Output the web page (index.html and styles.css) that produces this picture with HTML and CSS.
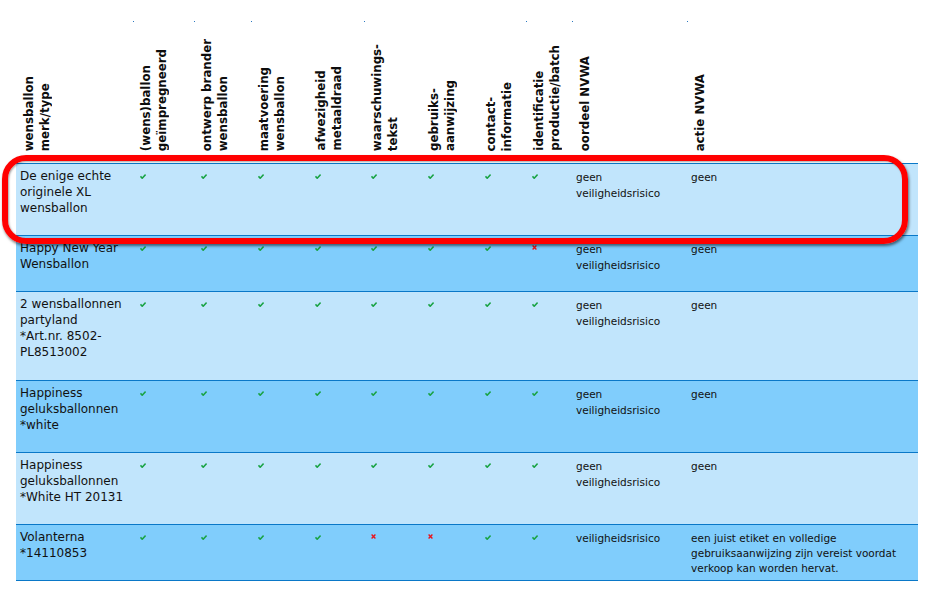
FILE: index.html
```html
<!DOCTYPE html>
<html lang="nl">
<head>
<meta charset="utf-8">
<title>Wensballonnen</title>
<link rel="stylesheet" href="styles.css">
</head>
<body>
<div class="page">
  <div class="grid dots">
    <span></span><span class="dot"></span><span class="dot"></span><span class="dot"></span><span></span><span class="dot"></span><span></span><span></span><span class="dot"></span><span class="dot"></span><span class="dot"></span>
  </div>
  <div class="grid head">
    <div class="th"><div class="rot">wensballon<br>merk/type</div></div>
    <div class="th"><div class="rot">(wens)ballon<br>geïmpregneerd</div></div>
    <div class="th"><div class="rot">ontwerp brander<br>wensballon</div></div>
    <div class="th"><div class="rot">maatvoering<br>wensballon</div></div>
    <div class="th"><div class="rot">afwezigheid<br>metaaldraad</div></div>
    <div class="th"><div class="rot">waarschuwings-<br>tekst</div></div>
    <div class="th"><div class="rot">gebruiks-<br>aanwijzing</div></div>
    <div class="th"><div class="rot">contact-<br>informatie</div></div>
    <div class="th"><div class="rot">identificatie<br>productie/batch</div></div>
    <div class="th"><div class="rot">oordeel NVWA</div></div>
    <div class="th"><div class="rot">actie NVWA</div></div>
  </div>

  <div class="grid row light">
    <div class="name">De enige echte<br>originele XL<br>wensballon</div>
    <div class="c"><i class="ok"></i></div><div class="c"><i class="ok"></i></div><div class="c"><i class="ok"></i></div><div class="c"><i class="ok"></i></div><div class="c"><i class="ok"></i></div><div class="c"><i class="ok"></i></div><div class="c"><i class="ok"></i></div><div class="c"><i class="ok"></i></div>
    <div class="t">geen<br>veiligheidsrisico</div>
    <div class="t">geen</div>
  </div>

  <div class="grid row dark">
    <div class="name">Happy New Year<br>Wensballon</div>
    <div class="c"><i class="ok"></i></div><div class="c"><i class="ok"></i></div><div class="c"><i class="ok"></i></div><div class="c"><i class="ok"></i></div><div class="c"><i class="ok"></i></div><div class="c"><i class="ok"></i></div><div class="c"><i class="ok"></i></div><div class="c"><i class="no"></i></div>
    <div class="t">geen<br>veiligheidsrisico</div>
    <div class="t">geen</div>
  </div>

  <div class="grid row light">
    <div class="name tall">2 wensballonnen<br>partyland<br>*Art.nr. 8502-<br>PL8513002</div>
    <div class="c"><i class="ok"></i></div><div class="c"><i class="ok"></i></div><div class="c"><i class="ok"></i></div><div class="c"><i class="ok"></i></div><div class="c"><i class="ok"></i></div><div class="c"><i class="ok"></i></div><div class="c"><i class="ok"></i></div><div class="c"><i class="ok"></i></div>
    <div class="t">geen<br>veiligheidsrisico</div>
    <div class="t">geen</div>
  </div>

  <div class="grid row dark">
    <div class="name">Happiness<br>geluksballonnen<br>*white</div>
    <div class="c"><i class="ok"></i></div><div class="c"><i class="ok"></i></div><div class="c"><i class="ok"></i></div><div class="c"><i class="ok"></i></div><div class="c"><i class="ok"></i></div><div class="c"><i class="ok"></i></div><div class="c"><i class="ok"></i></div><div class="c"><i class="ok"></i></div>
    <div class="t">geen<br>veiligheidsrisico</div>
    <div class="t">geen</div>
  </div>

  <div class="grid row light">
    <div class="name">Happiness<br>geluksballonnen<br>*White HT 20131</div>
    <div class="c"><i class="ok"></i></div><div class="c"><i class="ok"></i></div><div class="c"><i class="ok"></i></div><div class="c"><i class="ok"></i></div><div class="c"><i class="ok"></i></div><div class="c"><i class="ok"></i></div><div class="c"><i class="ok"></i></div><div class="c"><i class="ok"></i></div>
    <div class="t">geen<br>veiligheidsrisico</div>
    <div class="t">geen</div>
  </div>

  <div class="grid row dark last">
    <div class="name">Volanterna<br>*14110853</div>
    <div class="c"><i class="ok"></i></div><div class="c"><i class="ok"></i></div><div class="c"><i class="ok"></i></div><div class="c"><i class="ok"></i></div><div class="c"><i class="no"></i></div><div class="c"><i class="no"></i></div><div class="c"><i class="ok"></i></div><div class="c"><i class="ok"></i></div>
    <div class="t">veiligheidsrisico</div>
    <div class="t small">een juist etiket en volledige<br>gebruiksaanwijzing zijn vereist voordat<br>verkoop kan worden hervat.</div>
  </div>

  <div class="highlight"></div>
</div>
</body>
</html>
```

FILE: styles.css
```css
html, body {
  margin: 0;
  padding: 0;
  background: #ffffff;
}

body {
  font-family: "DejaVu Sans", Verdana, sans-serif;
  color: #111111;
  width: 935px;
  height: 601px;
  overflow: hidden;
}

.page {
  position: relative;
  padding-left: 16px;
}

.grid {
  display: grid;
  grid-template-columns: 117px 61px 57px 57px 56px 57px 57px 48px 46px 115px 231px;
  width: 902px;
}

.dots {
  padding-top: 21px;
  height: 1px;
}

.dots .dot {
  width: 1px;
  height: 1px;
  background: #2a78c0;
}

.head {
  height: 141px;
}

.th {
  display: flex;
  align-items: flex-end;
  padding: 0 0 12px 5px;
}

.rot {
  writing-mode: vertical-rl;
  transform: rotate(180deg);
  font-weight: bold;
  font-size: 11.8px;
  line-height: 16px;
  color: #0d0d0d;
  white-space: nowrap;
}

.row {
  border-top: 1px solid #0a78c8;
}

.row.last {
  border-bottom: 1px solid #0a78c8;
}

.light {
  background: #c1e5fc;
}

.dark {
  background: #80cdfc;
}

.name {
  font-size: 12px;
  line-height: 16px;
  padding: 4px 4px 19px 4px;
  white-space: nowrap;
}

.name.tall {
  padding-bottom: 20px;
}

.c {
  padding: 10px 0 0 7px;
}

.c:nth-child(9) {
  padding-left: 6px;
}

.t {
  font-size: 10.5px;
  line-height: 16px;
  padding: 5px 4px 0 4px;
  white-space: nowrap;
}

.t.small {
  line-height: 15px;
  padding-top: 6px;
  padding-bottom: 4px;
}

.ok, .no {
  display: block;
  width: 6px;
  height: 5px;
}

.ok {
  background: url("data:image/svg+xml;utf8,<svg xmlns='http://www.w3.org/2000/svg' width='6' height='5' viewBox='0 0 6 5'><path d='M0.5 2.4 L2.2 4.2 L5.6 0.6' fill='none' stroke='%2319a343' stroke-width='1.6'/></svg>") no-repeat;
}

.no {
  width: 5px;
  height: 5px;
  margin-top: -1px;
  background: url("data:image/svg+xml;utf8,<svg xmlns='http://www.w3.org/2000/svg' width='5' height='5' viewBox='0 0 5 5'><path d='M0.6 0.6 L4.4 4.4 M4.4 0.6 L0.6 4.4' fill='none' stroke='%23e8141c' stroke-width='1.4'/></svg>") no-repeat;
}

.highlight {
  position: absolute;
  left: 2px;
  top: 155px;
  width: 894px;
  height: 77px;
  border: 6px solid #ff0000;
  border-radius: 24px;
  box-shadow: 1px 2px 3px rgba(0, 0, 0, 0.55), inset 1px 1px 2px rgba(0, 0, 0, 0.35);
  pointer-events: none;
}
```
